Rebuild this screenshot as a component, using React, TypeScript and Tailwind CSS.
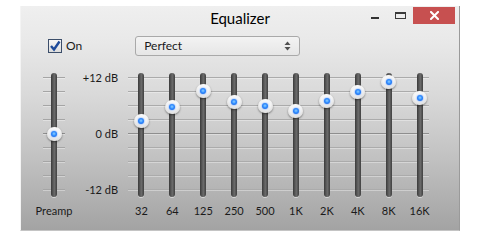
import React from "react";

const bands: { label: string; db: number }[] = [
  { label: "32", db: 2.6 },
  { label: "64", db: 5.6 },
  { label: "125", db: 9.0 },
  { label: "250", db: 6.6 },
  { label: "500", db: 5.8 },
  { label: "1K", db: 4.7 },
  { label: "2K", db: 6.9 },
  { label: "4K", db: 8.8 },
  { label: "8K", db: 10.9 },
  { label: "16K", db: 7.5 },
];

const preamp = -0.2;

function knobTop(db: number) {
  // center offset inside 124px track: +12 at 4px, -12 at 116px
  const c = 4 + ((12 - db) / 24) * 112;
  return c - 7;
}

function Slider({ db }: { db: number }) {
  return (
    <div className="relative w-[15px] h-[124px] flex justify-center">
      <div className="w-[6px] h-full rounded-full bg-[linear-gradient(90deg,#3a3a3a,#626262_45%,#6c6c6c_55%,#404040)] shadow-[0_1px_0_rgba(255,255,255,0.5)]" />
      <div
        className="absolute left-0 w-[15px] h-[14px] rounded-full bg-[radial-gradient(circle_at_50%_35%,#ffffff_0%,#f4f4f4_45%,#c9c9c9_100%)] shadow-[0_1px_2px_rgba(0,0,0,0.45)] flex items-center justify-center"
        style={{ top: knobTop(db) }}
      >
        <div className="w-[6px] h-[6px] rounded-full bg-[radial-gradient(circle_at_50%_45%,#8fd0ff_0%,#2f8cff_45%,#0a4fd8_100%)] shadow-[0_0_2px_rgba(40,120,255,0.9)]" />
      </div>
    </div>
  );
}

function Lines({ short }: { short?: boolean }) {
  const rows = Array.from({ length: 9 });
  return (
    <div className="absolute inset-x-0 top-[4px] h-[113px] flex flex-col justify-between">
      {rows.map((_, i) => (
        <div
          key={i}
          className={
            i === 4
              ? "h-px bg-[#8e8e8e] shadow-[0_1px_0_rgba(255,255,255,0.35)]"
              : short
              ? "h-px bg-[#a5a5a5] shadow-[0_1px_0_rgba(255,255,255,0.35)]"
              : "h-px bg-[#ababab] shadow-[0_1px_0_rgba(255,255,255,0.35)]"
          }
        />
      ))}
    </div>
  );
}

export default function App() {
  return (
    <div
      className="w-[496px] h-[240px] bg-white pt-[6px] pl-[20px] text-[#1a1a1a]"
      style={{ fontFamily: "Lato, 'Noto Sans', sans-serif" }}
    >
      <div className="w-[440px] h-[225px] flex flex-col border-l border-l-[#f4f4f4] border-r border-r-[#9a9a9a] border-b border-b-[#c4c4c4] bg-[linear-gradient(180deg,#efefef_0%,#e9e9e9_15%,#d9d9d9_40%,#c4c4c4_65%,#a3a3a3_100%)]">
        {/* title bar */}
        <div className="relative h-[18px] flex items-center justify-center">
          <span className="text-[15px] leading-none text-black mt-[6px]">Equalizer</span>
          <div className="absolute right-[4px] top-[1px] flex items-center">
            <div className="w-[8px] h-[2px] bg-[#333] mt-[4px] mr-[16px]" />
            <div className="w-[11px] h-[7px] border border-[#3a3a3a] border-t-2 mr-[7px]" />
            <div className="w-[42px] h-[17px] bg-[#c75050] flex items-center justify-center">
              <svg width="9" height="9" viewBox="0 0 9 9">
                <path d="M1 1 L8 8 M8 1 L1 8" stroke="white" strokeWidth="2" strokeLinecap="square" />
              </svg>
            </div>
          </div>
        </div>

        {/* controls row */}
        <div className="mt-[12px] h-[20px] flex items-center">
          <div className="ml-[27px] flex items-center">
            <div className="w-[14px] h-[14px] border border-[#3c4e6a] bg-[linear-gradient(180deg,#f6f6f6,#dcdcdc)] flex items-center justify-center">
              <svg width="12" height="12" viewBox="0 0 12 12">
                <path d="M2 6 L5 9.5 L10.5 1.5" fill="none" stroke="#1d4a9a" strokeWidth="2.4" />
              </svg>
            </div>
            <span className="ml-[4px] text-[12px] leading-none">On</span>
          </div>
          <div className="ml-[53px] w-[165px] h-[20px] rounded-[3px] border border-[#a9a9a9] bg-[linear-gradient(180deg,#f3f3f3,#e6e6e6)] flex items-center justify-between pl-[8px] pr-[8px]">
            <span className="text-[12px] leading-none">Perfect</span>
            <svg width="7" height="10" viewBox="0 0 7 10">
              <path d="M3.5 0.5 L6.5 4 L0.5 4 Z" fill="#505050" />
              <path d="M3.5 9.5 L6.5 6 L0.5 6 Z" fill="#505050" />
            </svg>
          </div>
        </div>

        {/* sliders */}
        <div className="mt-[17px] h-[124px] flex">
          <div className="relative ml-[22px] w-[22px] flex justify-center">
            <Lines short />
            <div className="relative">
              <Slider db={preamp} />
            </div>
          </div>
          <div className="w-[53px] relative text-[11px] leading-none">
            <div className="absolute right-0 top-[4px] h-[112px] flex flex-col justify-between items-end">
              <div className="h-0 flex items-center">+12 dB</div>
              <div className="h-0 flex items-center">0 dB</div>
              <div className="h-0 flex items-center">-12 dB</div>
            </div>
          </div>
          <div className="relative ml-[8px] w-[309px] grid grid-cols-10">
            <div className="absolute top-0 bottom-0 left-[2px] right-[6px]">
              <Lines />
            </div>
            {bands.map((b) => (
              <div key={b.label} className="relative flex justify-center">
                <Slider db={b.db} />
              </div>
            ))}
          </div>
        </div>

        {/* labels */}
        <div className="mt-[7px] flex text-[11px] leading-[14px]">
          <div className="ml-[22px] w-[22px] flex justify-center whitespace-nowrap">Preamp</div>
          <div className="w-[53px]" />
          <div className="ml-[8px] w-[309px] grid grid-cols-10">
            {bands.map((b) => (
              <div key={b.label} className="text-center">
                {b.label}
              </div>
            ))}
          </div>
        </div>
      </div>
    </div>
  );
}
